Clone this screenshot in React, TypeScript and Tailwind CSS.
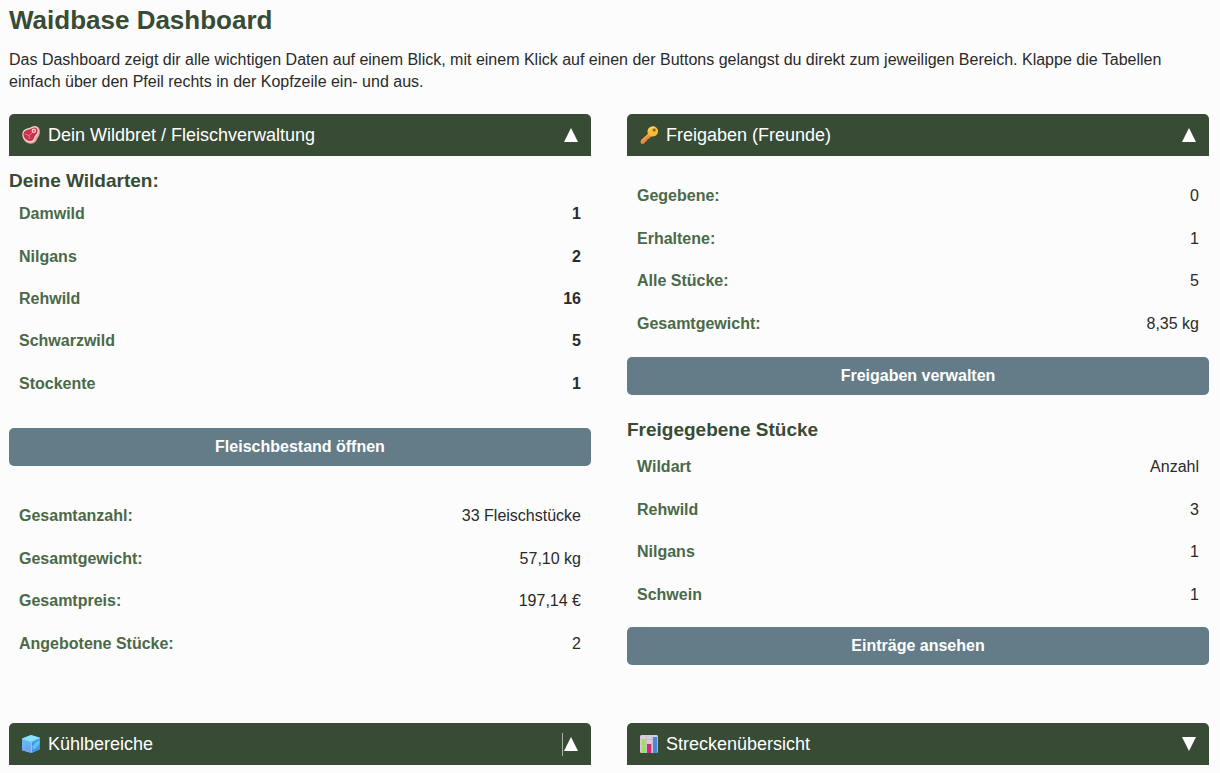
import type { ReactNode } from 'react'
import { useState } from 'react'

type Row = { label: string; value: string }

const wildarten: Row[] = [
  { label: 'Damwild', value: '1' },
  { label: 'Nilgans', value: '2' },
  { label: 'Rehwild', value: '16' },
  { label: 'Schwarzwild', value: '5' },
  { label: 'Stockente', value: '1' },
]

const bestand: Row[] = [
  { label: 'Gesamtanzahl:', value: '33 Fleischstücke' },
  { label: 'Gesamtgewicht:', value: '57,10 kg' },
  { label: 'Gesamtpreis:', value: '197,14 €' },
  { label: 'Angebotene Stücke:', value: '2' },
]

const freigaben: Row[] = [
  { label: 'Gegebene:', value: '0' },
  { label: 'Erhaltene:', value: '1' },
  { label: 'Alle Stücke:', value: '5' },
  { label: 'Gesamtgewicht:', value: '8,35 kg' },
]

const freigegeben: Row[] = [
  { label: 'Wildart', value: 'Anzahl' },
  { label: 'Rehwild', value: '3' },
  { label: 'Nilgans', value: '1' },
  { label: 'Schwein', value: '1' },
]

function MeatIcon() {
  return (
    <svg viewBox="0 0 18 18" className="size-[18px]" aria-hidden="true">
      <path d="M1 8C1 4.500 4 3 7 2.500C9 2 10 .3 13 .3C16.500 .3 18.300 3 17.800 7C17.500 10 16 11 15 13.500C13.800 16.500 11 18 8 17.700C3 17 0 12.500 1 8Z" fill="#d9a6a0" />
      <path d="M.4 8C.4 4.500 3.200 3 6.200 2.300C9 1.700 10 .3 12.500 .3C15.800 .3 17.300 3 16.800 6C16.300 9 14 10 13.300 12.500C12.500 15.500 10 16.800 7.500 16.300C3 15.500 0 12 .4 8Z" fill="#f4d3c8" />
      <path d="M1.500 8C1.500 5.300 4.300 4 6.800 3.500C9.500 3 10.500 1.600 12.500 1.600C14.900 1.600 16 3.700 15.500 6C15 8.300 12.700 9.200 12.100 11.800C11.500 14.200 9.600 15.300 7.500 15C4 14.300 1.200 11.500 1.500 8Z" fill="#c8324f" />
      <path d="M3 8L7 9.500L7.500 13M7 9.500L10 7" stroke="#e8798a" strokeWidth="1" fill="none" />
      <circle cx="11.800" cy="4.800" r="2.200" fill="#f5dccb" />
      <circle cx="11.800" cy="4.800" r="1.100" fill="#c15563" />
    </svg>
  )
}

function KeyIcon() {
  return (
    <svg viewBox="0 0 18 18" className="size-[18px]" aria-hidden="true">
      <path d="M8.200 7.500L1 14.200L.4 16.500L1.800 17.900L4.200 17.400L5 15.900L6.400 15.500L7 14L8.300 13.300L12 10Z" fill="#e98a3c" />
      <path d="M8.800 8.300L1.600 14.800" stroke="#f6a84b" strokeWidth="1.200" />
      <path d="M7.800 3.800C8.600 1 11.800 -.4 14.600 .4C17.400 1.300 18.800 4.500 17.600 7.200C16.400 10 13 11.300 10.200 10C7.800 8.800 6.900 6.400 7.800 3.800Z" fill="#f6bd32" />
      <path d="M8.800 4.800C9.800 2 12.300 .9 14.800 1.500" stroke="#ffda59" strokeWidth="1.300" fill="none" />
      <circle cx="14.200" cy="4.100" r="1.500" fill="#7d6028" />
    </svg>
  )
}

function IceIcon() {
  return (
    <svg viewBox="0 0 18 18" className="size-[18px]" aria-hidden="true">
      <path d="M9 0L18 2.800V14.300L9.500 18L0 15.200V3.500Z" fill="#58aef0" />
      <path d="M0 3.500L9 0L18 2.800L9.500 6.600Z" fill="#8be3fb" />
      <path d="M0 3.500L9.500 6.600V18L0 15.200Z" fill="#63b5f5" />
      <path d="M9.500 6.600L18 2.800V14.300L9.500 18Z" fill="#4296e2" />
      <path d="M.5 14L6 9L9 17.200L.5 14.900Z" fill="#7c9df0" />
      <path d="M10 12L14 7L17.500 5V9L12 15Z" fill="#62c0f4" />
      <path d="M.5 4L9.500 6.900L17.500 3.300M9.500 7V17" stroke="#a0ebff" strokeWidth=".6" fill="none" />
    </svg>
  )
}

function ChartIcon() {
  return (
    <svg viewBox="0 0 18 18" className="size-[18px]" aria-hidden="true">
      <rect width="18" height="18" rx="1.500" fill="#d8cddd" />
      <path d="M0 4.500H18M0 9H18M0 13.500H18M6.500 0V18M12 0V18" stroke="#c4b8cc" strokeWidth=".7" />
      <rect x="1.500" y="4" width="4.300" height="14" fill="#a2dc62" />
      <rect x="7" y="9" width="4.300" height="9" fill="#cf2d72" />
      <rect x="13" y="2" width="4.300" height="16" fill="#438bd6" />
    </svg>
  )
}

type PanelProps = {
  icon: ReactNode
  title: string
  defaultOpen?: boolean
  caret?: boolean
  children?: ReactNode
}

function Panel({ icon, title, defaultOpen = true, caret = false, children }: PanelProps) {
  const [open, setOpen] = useState(defaultOpen)

  return (
    <section>
      <h2>
        <button
          type="button"
          aria-expanded={open}
          onClick={() => setOpen(!open)}
          className="relative flex h-[42px] w-full items-center gap-2 rounded-t-[5px] bg-[#384b35] px-[13px] text-left text-lg text-white"
        >
          {icon}
          <span className="flex-1">{title}</span>
          {caret && <span className="absolute right-7 h-[23px] w-px bg-[#a9b3a8]" />}
          <svg viewBox="0 0 14 14" className="size-[14px]" fill="currentColor" aria-hidden="true">
            {open ? <path d="M7 0L14 14H0Z" /> : <path d="M0 0H14L7 14Z" />}
          </svg>
        </button>
      </h2>
      {open && children}
    </section>
  )
}

function DataTable({ rows, bold = false }: { rows: Row[]; bold?: boolean }) {
  return (
    <table className={rows.length === 5 ? 'h-[212px] w-full' : 'h-[170px] w-full'}>
      <tbody>
        {rows.map((row) => (
          <tr key={row.label}>
            <th scope="row" className="px-[10px] text-left font-bold text-[#4b6948]">{row.label}</th>
            <td className={bold ? 'px-[10px] text-right font-bold' : 'px-[10px] text-right'}>{row.value}</td>
          </tr>
        ))}
      </tbody>
    </table>
  )
}

function ActionButton({ children }: { children: ReactNode }) {
  return (
    <button type="button" className="block h-[38px] w-full rounded-[5px] bg-[#647c88] font-bold text-white">
      {children}
    </button>
  )
}

export default function App() {
  return (
    <main className="min-h-screen bg-[#fcfcfc] pt-1 pr-[11px] pb-2 pl-[9px] font-['Liberation_Sans',Arial,sans-serif] text-base text-[#2a2a2a]">
      <h1 className="text-[26px] leading-8 font-bold text-[#384b35]">Waidbase Dashboard</h1>
      <p className="mt-[13px] leading-[22px]">
        Das Dashboard zeigt dir alle wichtigen Daten auf einem Blick, mit einem Klick auf einen der Buttons gelangst du
        direkt zum jeweiligen Bereich. Klappe die Tabellen einfach über den Pfeil rechts in der Kopfzeile ein- und aus.
      </p>

      <div className="mt-[21px] grid grid-cols-2 gap-x-9 gap-y-[58px]">
        <Panel icon={<MeatIcon />} title="Dein Wildbret / Fleischverwaltung">
          <h3 className="mt-[13px] text-[19px] leading-6 font-bold text-[#384b35]">Deine Wildarten:</h3>
          <DataTable rows={wildarten} bold />
          <div className="mt-[23px] mb-[29px]">
            <ActionButton>Fleischbestand öffnen</ActionButton>
          </div>
          <DataTable rows={bestand} />
        </Panel>

        <Panel icon={<KeyIcon />} title="Freigaben (Freunde)">
          <div className="mt-[19px] mb-3">
            <DataTable rows={freigaben} />
          </div>
          <ActionButton>Freigaben verwalten</ActionButton>
          <h3 className="mt-[23px] text-[19px] leading-6 font-bold text-[#384b35]">Freigegebene Stücke</h3>
          <div className="mt-1 mb-[11px]">
            <DataTable rows={freigegeben} />
          </div>
          <ActionButton>Einträge ansehen</ActionButton>
        </Panel>

        <Panel icon={<IceIcon />} title="Kühlbereiche" caret />
        <Panel icon={<ChartIcon />} title="Streckenübersicht" defaultOpen={false} />
      </div>
    </main>
  )
}
